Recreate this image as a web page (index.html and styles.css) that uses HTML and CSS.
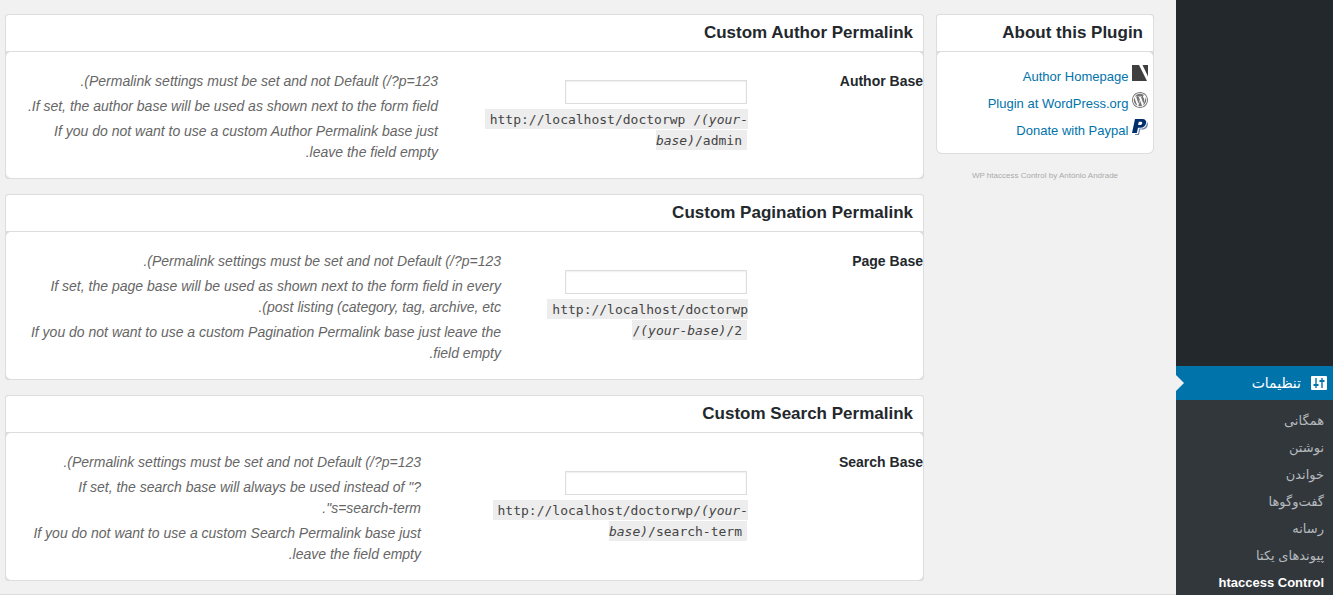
FILE: index.html
```html
<!DOCTYPE html>
<html lang="fa" dir="rtl">
<head>
    <meta charset="UTF-8">
    <title>htaccess Control</title>
    <link rel="stylesheet" href="styles.css">
</head>
<body>
    <div class="layout">
        <nav class="sidebar">
            <a class="current" href="#">
                <svg width="16" height="16" viewBox="0 0 16 16">
                    <rect x="0" y="1" width="16" height="14" rx="1" fill="#fff"/>
                    <path d="M5 3v10M11 3v10" stroke="#0073aa" stroke-width="1.4"/>
                    <path d="M2.500 10h5M8.500 6h5" stroke="#0073aa" stroke-width="2"/>
                </svg>
                تنظیمات
            </a>
            <ul class="submenu">
                <li><a href="#">همگانی</a></li>
                <li><a href="#">نوشتن</a></li>
                <li><a href="#">خواندن</a></li>
                <li><a href="#">گفت‌وگوها</a></li>
                <li><a href="#">رسانه</a></li>
                <li><a href="#">پیوندهای یکتا</a></li>
                <li><a class="active" href="#">htaccess Control</a></li>
            </ul>
        </nav>

        <main class="content">
            <div class="columns">
                <aside class="about">
                    <section class="box about-box">
                        <h3>About this Plugin</h3>
                        <ul class="links box-body">
                            <li>
                                <svg width="16" height="16" viewBox="0 0 16 16">
                                    <path d="M0 0h16v16H0z" fill="#3f3f3f"/>
                                    <path d="M7 0h3.500L16 11.500V16h-1z" fill="#fff"/>
                                </svg>
                                <a href="#">Author Homepage</a>
                            </li>
                            <li>
                                <svg width="16" height="16" viewBox="0 0 24 24" fill="#777">
                                    <path d="M12 0C5.400 0 0 5.400 0 12s5.400 12 12 12 12-5.400 12-12S18.600 0 12 0zm0 1.400c5.900 0 10.600 4.700 10.600 10.600S17.900 22.600 12 22.600 1.400 17.900 1.400 12 6.100 1.400 12 1.400z"/>
                                    <path d="M2.600 12c0 3.700 2.200 6.900 5.300 8.400L3.400 8.200C2.900 9.400 2.600 10.700 2.600 12zm15.700-.5c0-1.200-.4-2-.8-2.600-.5-.8-1-1.500-1-2.300 0-.9.700-1.700 1.600-1.700h.1C16.600 3.400 14.400 2.600 12 2.600c-3.300 0-6.200 1.700-7.900 4.200h.6c1 0 2.600-.1 2.600-.1.500 0 .6.700.1.800 0 0-.5.100-1.100.1l3.400 10.200 2.100-6.200-1.500-4c-.5 0-1-.1-1-.1-.5 0-.5-.8.100-.8 0 0 1.600.1 2.500.1 1 0 2.600-.1 2.600-.1.500 0 .6.700.1.800 0 0-.5.100-1.100.1l3.400 10.100 1-3.100c.3-1.300.4-2.300.4-3.100zm-6.100 1.300l-2.900 8.200c.9.300 1.800.4 2.700.4 1.100 0 2.200-.2 3.200-.5zm8.100-5.300c.1 1.300-.1 2.700-.7 4.100l-2.900 8.500c2.800-1.700 4.700-4.700 4.700-8.100 0-1.600-.4-3.200-1.100-4.500z"/>
                                </svg>
                                <a href="#">Plugin at WordPress.org</a>
                            </li>
                            <li>
                                <svg width="16" height="16" viewBox="0 0 16 16">
                                    <path d="M6 2h8c2.400 1.500 2.300 4 1 6.200-1 1.700-2.700 2.400-4.700 2.400H8.200L7 16H3z" fill="#7388b0"/>
                                    <path d="M5 1h9c1.300 1.700 1 4 0 5.800-1 1.700-2.500 2.700-4.700 2.700H7.200L6 15H2z" fill="#fff"/>
                                    <path d="M3 0h7.300c3 0 4.300 1.600 3.700 4.300-.7 3-2.500 4.400-5.400 4.400H6L4.800 14H0zM6.800 2.700L6.100 6h1.700c1.500 0 2.200-.6 2.400-1.800.2-1-.3-1.500-1.600-1.500z" fill="#002f6c" fill-rule="evenodd"/>
                                </svg>
                                <a href="#">Donate with Paypal</a>
                            </li>
                        </ul>
                    </section>
                    <p class="credit">WP htaccess Control by António Andrade</p>
                </aside>

                <form class="settings">
                    <section class="box">
                        <h3>Custom Author Permalink</h3>
                        <div class="box-body">
                            <table class="form-table author">
                                <tr>
                                    <th><label for="author-base">Author Base</label></th>
                                    <td class="field">
                                        <input type="text" id="author-base">
                                        <code>http://localhost/doctorwp /<i>(your-base)</i>/admin</code>
                                    </td>
                                    <td class="description">
                                        <p><bdi>Permalink settings must be set and not Default (/?p=123</bdi>).</p>
                                        <p>If set, the author base will be used as shown next to the form field.</p>
                                        <p>If you do not want to use a custom Author Permalink base just leave the field empty.</p>
                                    </td>
                                </tr>
                            </table>
                        </div>
                    </section>

                    <section class="box">
                        <h3>Custom Pagination Permalink</h3>
                        <div class="box-body">
                            <table class="form-table page">
                                <tr>
                                    <th><label for="page-base">Page Base</label></th>
                                    <td class="field">
                                        <input type="text" id="page-base">
                                        <code>http://localhost/doctorwp /<i>(your-base)</i>/2</code>
                                    </td>
                                    <td class="description">
                                        <p><bdi>Permalink settings must be set and not Default (/?p=123</bdi>).</p>
                                        <p><bdi>If set, the page base will be used as shown next to the form field in every post listing (category, tag, archive, etc</bdi>).</p>
                                        <p>If you do not want to use a custom Pagination Permalink base just leave the field empty.</p>
                                    </td>
                                </tr>
                            </table>
                        </div>
                    </section>

                    <section class="box">
                        <h3>Custom Search Permalink</h3>
                        <div class="box-body">
                            <table class="form-table search">
                                <tr>
                                    <th><label for="search-base">Search Base</label></th>
                                    <td class="field">
                                        <input type="text" id="search-base">
                                        <code>http://localhost/doctorwp/<i>(your-base)</i>/search-term</code>
                                    </td>
                                    <td class="description">
                                        <p><bdi>Permalink settings must be set and not Default (/?p=123</bdi>).</p>
                                        <p><bdi>If set, the search base will always be used instead of "?<wbr>s=search-term</bdi>".</p>
                                        <p>If you do not want to use a custom Search Permalink base just leave the field empty.</p>
                                    </td>
                                </tr>
                            </table>
                        </div>
                    </section>
                </form>
            </div>
            <footer class="footer"></footer>
        </main>
    </div>
</body>
</html>
```

FILE: styles.css
```css
* {
    box-sizing: border-box;
}

body {
    margin: 0;
    background: #f1f1f1;
    color: #23282d;
    font-family: "Liberation Sans", "DejaVu Sans", sans-serif;
    font-size: 13px;
}

h3, p, ul {
    margin: 0;
    padding: 0;
}

ul {
    list-style: none;
}

a {
    color: #0073aa;
    text-decoration: none;
}

.layout {
    display: flex;
    height: 100vh;
    overflow: hidden;
}

/* menu */
.sidebar {
    flex: none;
    width: 157px;
    padding-top: 366px;
    background: #23282d;
}

.current {
    position: relative;
    display: flex;
    align-items: center;
    gap: 10px;
    height: 34px;
    padding-right: 6px;
    background: #0073aa;
    color: #fff;
    font-size: 14px;
}

.current::after {
    content: "";
    position: absolute;
    left: 0;
    top: 9px;
    border: 8px solid transparent;
    border-left-color: #f1f1f1;
    border-right-width: 0;
}

.submenu {
    padding: 7px 9px;
    background: #32373c;
}

.submenu a {
    display: block;
    line-height: 27px;
    color: #b4b9be;
}

.submenu .active {
    color: #fff;
    font-weight: bold;
}

/* page */
.content {
    flex: 1;
    min-width: 0;
    padding: 14px 22px 0 0;
}

.columns {
    display: flex;
    gap: 12px;
    padding-left: 5px;
}

.about {
    flex: none;
    width: 218px;
}

.settings {
    flex: 1;
    min-width: 0;
}

.box {
    margin-bottom: 15px;
    border: 1px solid #ddd;
    border-radius: 3px;
    background: #ddd;
}

.settings .box:last-child {
    margin-bottom: 13px;
}

.about-box {
    border-radius: 3px 3px 6px 6px;
}

.box h3 {
    padding: 0 10px;
    border-bottom: 1px solid #ddd;
    border-radius: 3px 3px 0 0;
    background: #fff;
    font-size: 17px;
    line-height: 36px;
}

.box-body {
    border-radius: 5px;
    background: #fff;
}

.links {
    padding: 11px 5px 9px;
}

.links li {
    height: 27px;
    line-height: 27px;
}

.credit {
    color: #aaa;
    font-size: 8px;
    line-height: 14px;
    text-align: center;
}

.form-table {
    width: 100%;
    table-layout: fixed;
    border-collapse: collapse;
    font-size: 14px;
    line-height: 21px;
}

.form-table th {
    width: 165px;
    padding: 19px 0;
    text-align: right;
    vertical-align: top;
}

.field {
    padding: 15px 10px;
    vertical-align: middle;
}

.author .field {
    width: 310px;
}

.page .field {
    width: 247px;
}

.search .field {
    width: 327px;
}

.field input {
    display: block;
    width: 182px;
    height: 24px;
    margin: 0 1px 5px;
    padding: 3px 5px;
    border: 1px solid #ddd;
    background: #fff;
    box-shadow: inset 0 1px 2px rgba(0, 0, 0, 0.07);
}

.field code {
    direction: ltr;
    unicode-bidi: embed;
    margin: 0 1px;
    padding: 3px 5px 2px;
    background: #ededed;
    color: #444;
    font-family: "DejaVu Sans Mono", monospace;
    font-size: 13px;
}

.description {
    padding: 19px 10px 15px 20px;
    vertical-align: top;
    color: #666;
    font-style: italic;
}

.description p + p {
    margin-top: 4px;
}

.footer {
    margin-right: -22px;
    border-top: 1px solid #ddd;
}
```
